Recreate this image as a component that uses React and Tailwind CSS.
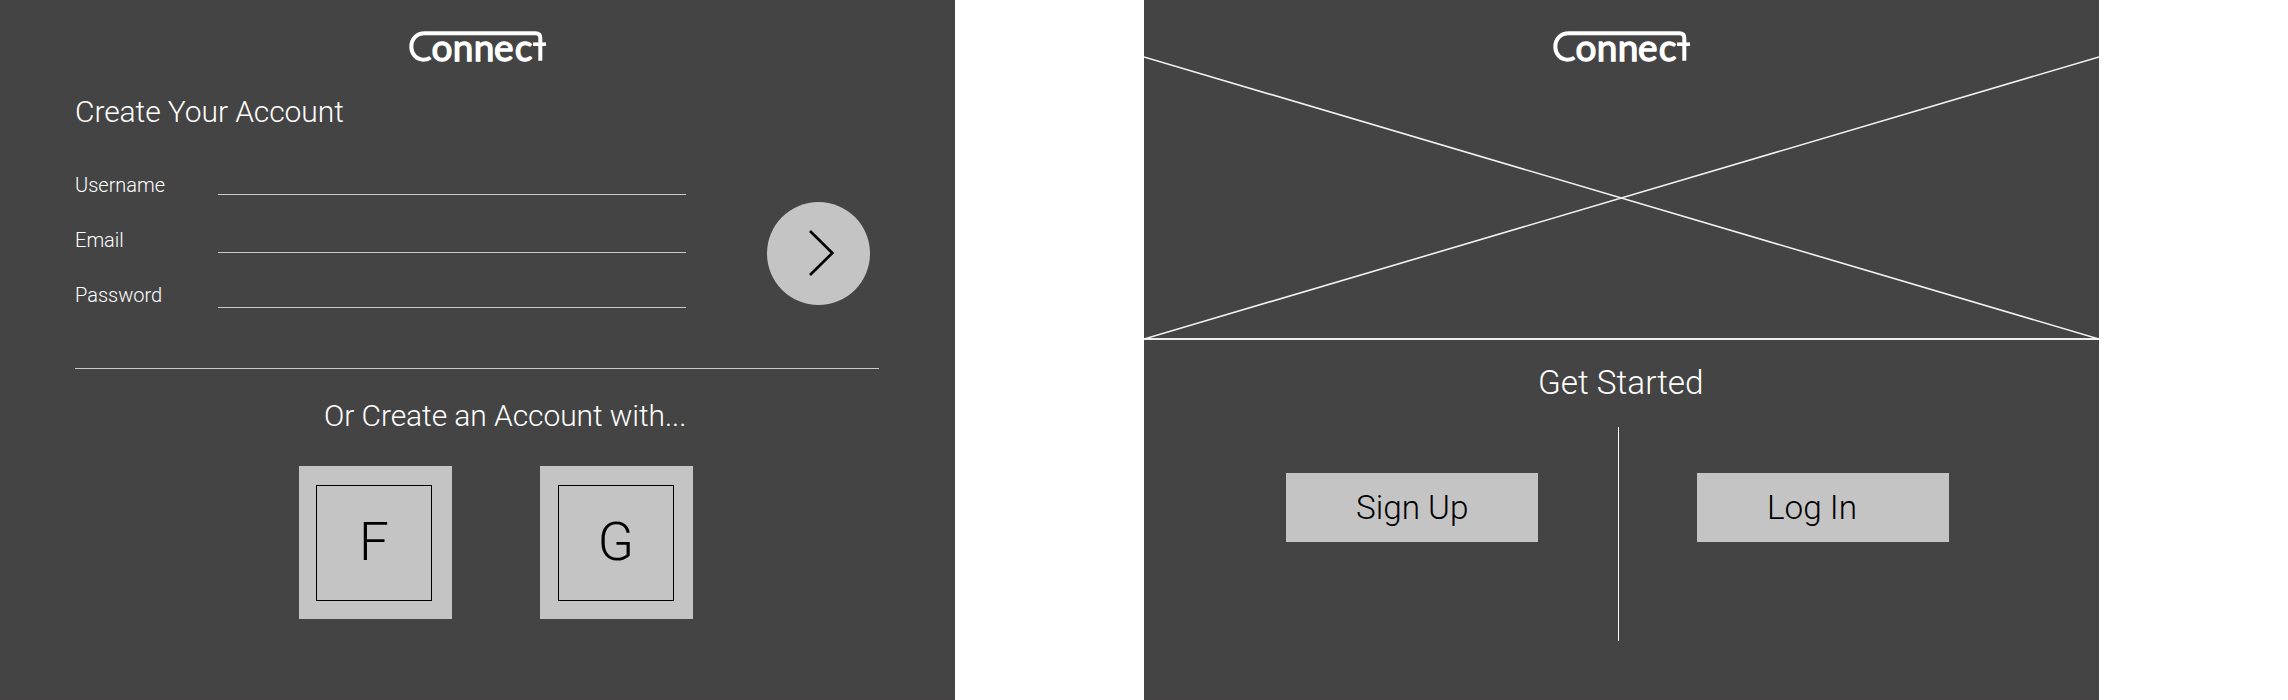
function Logo() {
  return (
    <svg role="img" aria-label="Connect" viewBox="0 0 150 48" className="block h-12 w-[150px] overflow-visible" fill="none" stroke="#fff">
      <path d="M22.500 29.600C20.500 31.300 18 31.700 15.500 31.700C8.500 31.700 3.300 26 3.300 18.800C3.300 11 8.500 5.200 17 5.200H127.500Q132.300 5.200 132.300 10V32.700" strokeWidth="4" />
      <path d="M125 16.200H138" strokeWidth="3.600" />
      <text x="23.400 44.800 65.800 85.900 106.800" y="32.500" fill="#fff" strokeWidth="1.300" fontSize="37" fontWeight="400" fontFamily="Lato, sans-serif">
        onnec
      </text>
    </svg>
  );
}

function Field({ label, className, labelClassName }) {
  return (
    <label className={`flex h-[30px] w-[611px] items-end ${className}`}>
      <span className={`w-[143px] text-[20px] leading-[20px] ${labelClassName}`}>{label}</span>
      <input aria-label={label} className="h-[30px] w-[468px] border-b border-[#cbcbcb] bg-transparent outline-none" />
    </label>
  );
}

function SocialTile({ letter, className }) {
  return (
    <button className={`flex h-[153px] w-[153px] items-start bg-[#c4c4c4] pt-[19px] text-black ${className}`}>
      <span className="flex h-[116px] w-[116px] items-center justify-center border border-black pb-0.5 text-[53px] leading-none">
        {letter}
      </span>
    </button>
  );
}

function CreateAccount() {
  return (
    <section className="h-[700px] w-[955px] shrink-0 border-b border-[#484244] bg-[#444444] pt-7">
      <div className="h-9 pl-[408px]">
        <Logo />
      </div>
      <h1 className="mt-[30px] pl-[75px] text-[30px] leading-9 tracking-[-0.08px]">Create Your Account</h1>
      <div className="mt-[35px] flex h-[143px] pl-[75px]">
        <form className="w-[691.5px]">
          <Field label="Username" />
          <Field label="Email" className="mt-7" labelClassName="pb-[3px]" />
          <Field label="Password" className="mt-[25px]" labelClassName="pb-[3px]" />
        </form>
        <button aria-label="Continue" className="mt-[36.5px] h-[103px] w-[103px] rounded-full bg-[#c4c4c4]">
          <svg viewBox="0 0 103 103" className="h-full w-full" fill="none" stroke="#000" strokeWidth="2.700">
            <path d="M43 29L65.300 51L43 73" />
          </svg>
        </button>
      </div>
      <hr className="mt-[60px] ml-[75px] w-[804px] border-[#cbcbcb]" />
      <h2 className="mt-[29px] pl-[324px] text-[30px] leading-9 tracking-[-0.08px]">Or Create an Account with...</h2>
      <div className="mt-8 flex gap-[88px] pl-[299px]">
        <SocialTile letter="F" className="pl-[17px]" />
        <SocialTile letter="G" className="pl-[18px]" />
      </div>
    </section>
  );
}

function GetStarted() {
  return (
    <section className="h-[700px] w-[955px] shrink-0 border-b border-[#484244] bg-[#444444]">
      <div className="relative h-[340px] border-b-2 border-[#eeeeee] pt-7 pl-[408px]">
        <Logo />
        <svg viewBox="0 0 955 340" className="absolute top-0 left-0 h-[340px] w-[955px]" stroke="#f2f2f2" strokeWidth="1.600">
          <path d="M0 57L955 339M955 57L0 339" />
        </svg>
      </div>
      <h1 className="mt-[22px] pl-[394px] text-[33.300px] leading-[42px]">Get Started</h1>
      <div className="mt-[23px] flex h-[214px]">
        <button className="mt-[46px] ml-[142px] h-[69px] w-[252px] bg-[#c4c4c4] pl-[70px] text-left text-[33.300px] leading-[69px] text-black">
          Sign Up
        </button>
        <div className="ml-[80px] h-[214px] w-px bg-white" />
        <button className="mt-[46px] ml-[78px] h-[69px] w-[252px] bg-[#c4c4c4] pl-[70px] text-left text-[33.300px] leading-[69px] text-black">
          Log In
        </button>
      </div>
    </section>
  );
}

export default function App() {
  return (
    <main className="flex h-[700px] w-[2288px] gap-[189px] overflow-hidden bg-white font-['Roboto',sans-serif] font-light text-white">
      <CreateAccount />
      <GetStarted />
    </main>
  );
}
